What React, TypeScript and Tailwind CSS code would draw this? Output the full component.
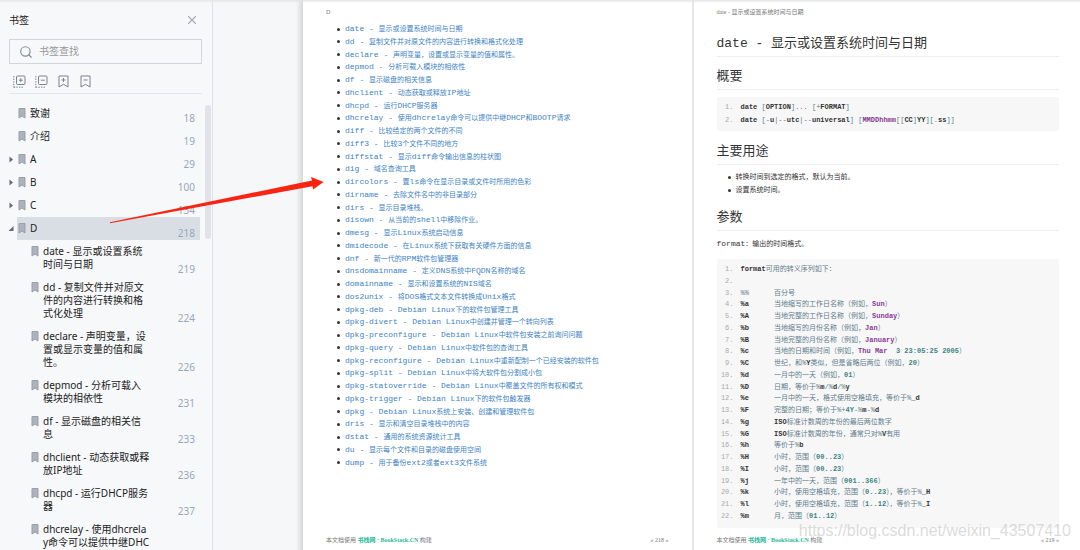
import { Fragment } from "react";
import { Search, X } from "lucide-react";

type Entry = { lines: string[]; page: number; level: 0 | 1; state?: "closed" | "open" };

const BOOKMARKS: Entry[] = [
  { lines: ["致谢"], page: 18, level: 0 },
  { lines: ["介绍"], page: 19, level: 0 },
  { lines: ["A"], page: 29, level: 0, state: "closed" },
  { lines: ["B"], page: 100, level: 0, state: "closed" },
  { lines: ["C"], page: 134, level: 0, state: "closed" },
  { lines: ["D"], page: 218, level: 0, state: "open" },
  { lines: ["date - 显示或设置系统", "时间与日期"], page: 219, level: 1 },
  { lines: ["dd - 复制文件并对原文", "件的内容进行转换和格", "式化处理"], page: 224, level: 1 },
  { lines: ["declare - 声明变量，设", "置或显示变量的值和属", "性。"], page: 226, level: 1 },
  { lines: ["depmod - 分析可载入", "模块的相依性"], page: 231, level: 1 },
  { lines: ["df - 显示磁盘的相关信", "息"], page: 233, level: 1 },
  { lines: ["dhclient - 动态获取或释", "放IP地址"], page: 236, level: 1 },
  { lines: ["dhcpd - 运行DHCP服务", "器"], page: 237, level: 1 },
  { lines: ["dhcrelay - 使用dhcrela", "y命令可以提供中继DHC", "P和BOOTP请求"], page: 238, level: 1 },
];

const COMMANDS = [
  "date - 显示或设置系统时间与日期",
  "dd - 复制文件并对原文件的内容进行转换和格式化处理",
  "declare - 声明变量，设置或显示变量的值和属性。",
  "depmod - 分析可载入模块的相依性",
  "df - 显示磁盘的相关信息",
  "dhclient - 动态获取或释放IP地址",
  "dhcpd - 运行DHCP服务器",
  "dhcrelay - 使用dhcrelay命令可以提供中继DHCP和BOOTP请求",
  "diff - 比较给定的两个文件的不同",
  "diff3 - 比较3个文件不同的地方",
  "diffstat - 显示diff命令输出信息的柱状图",
  "dig - 域名查询工具",
  "dircolors - 置ls命令在显示目录或文件时所用的色彩",
  "dirname - 去除文件名中的非目录部分",
  "dirs - 显示目录堆栈。",
  "disown - 从当前的shell中移除作业。",
  "dmesg - 显示Linux系统启动信息",
  "dmidecode - 在Linux系统下获取有关硬件方面的信息",
  "dnf - 新一代的RPM软件包管理器",
  "dnsdomainname - 定义DNS系统中FQDN名称的域名",
  "domainname - 显示和设置系统的NIS域名",
  "dos2unix - 将DOS格式文本文件转换成Unix格式",
  "dpkg-deb - Debian Linux下的软件包管理工具",
  "dpkg-divert - Debian Linux中创建并管理一个转向列表",
  "dpkg-preconfigure - Debian Linux中软件包安装之前询问问题",
  "dpkg-query - Debian Linux中软件包的查询工具",
  "dpkg-reconfigure - Debian Linux中重新配制一个已经安装的软件包",
  "dpkg-split - Debian Linux中将大软件包分割成小包",
  "dpkg-statoverride - Debian Linux中覆盖文件的所有权和模式",
  "dpkg-trigger - Debian Linux下的软件包触发器",
  "dpkg - Debian Linux系统上安装、创建和管理软件包",
  "dris - 显示和清空目录堆栈中的内容",
  "dstat - 通用的系统资源统计工具",
  "du - 显示每个文件和目录的磁盘使用空间",
  "dump - 用于备份ext2或者ext3文件系统",
];

// k = keyword, t = type, n = number, p = punctuation
type Token = ["k" | "t" | "n" | "p", string];

const TOKEN_COLOR = {
  k: "font-bold text-[#333333]",
  t: "font-bold text-[#8a3a93]",
  n: "font-bold text-[#3c8585]",
  p: "text-[#5f7d8c]",
};

const SYNOPSIS: Token[][] = [
  [["k", "date "], ["p", "["], ["k", "OPTION"], ["p", "]... [+"], ["k", "FORMAT"], ["p", "]"]],
  [
    ["k", "date "], ["p", "[-"], ["k", "u"], ["p", "|--"], ["k", "utc"], ["p", "|--"], ["k", "universal"], ["p", "] ["],
    ["t", "MMDDhhmm"], ["p", "[["], ["k", "CC"], ["p", "]"], ["k", "YY"], ["p", "][."], ["k", "ss"], ["p", "]]"],
  ],
];

const FORMATS: Token[][] = [
  [["k", "format"], ["p", "可用的转义序列如下："]],
  [],
  [["p", "%%      百分号"]],
  [["k", "%a      "], ["p", "当地缩写的工作日名称（例如，"], ["t", "Sun"], ["p", "）"]],
  [["k", "%A      "], ["p", "当地完整的工作日名称（例如，"], ["t", "Sunday"], ["p", "）"]],
  [["k", "%b      "], ["p", "当地缩写的月份名称（例如，"], ["t", "Jan"], ["p", "）"]],
  [["k", "%B      "], ["p", "当地完整的月份名称（例如，"], ["t", "January"], ["p", "）"]],
  [["k", "%c      "], ["p", "当地的日期和时间（例如，"], ["t", "Thu Mar  "], ["n", "3 23:05:25 2005"], ["p", "）"]],
  [["k", "%C      "], ["p", "世纪，和%"], ["k", "Y"], ["p", "类似，但是省略后两位（例如，"], ["n", "20"], ["p", "）"]],
  [["k", "%d      "], ["p", "一月中的一天（例如，"], ["n", "01"], ["p", "）"]],
  [["k", "%D      "], ["p", "日期，等价于%"], ["k", "m"], ["p", "/%"], ["k", "d"], ["p", "/%"], ["k", "y"]],
  [["k", "%e      "], ["p", "一月中的一天，格式使用空格填充，等价于%"], ["k", "_d"]],
  [["k", "%F      "], ["p", "完整的日期；等价于%+"], ["n", "4Y"], ["p", "-%"], ["k", "m"], ["p", "-%"], ["k", "d"]],
  [["k", "%g      ISO"], ["p", "标准计数周的年份的最后两位数字"]],
  [["k", "%G      ISO"], ["p", "标准计数周的年份，通常只对%"], ["k", "V"], ["p", "有用"]],
  [["k", "%h      "], ["p", "等价于%"], ["k", "b"]],
  [["k", "%H      "], ["p", "小时，范围（"], ["n", "00..23"], ["p", "）"]],
  [["k", "%I      "], ["p", "小时，范围（"], ["n", "00..23"], ["p", "）"]],
  [["k", "%j      "], ["p", "一年中的一天，范围（"], ["n", "001..366"], ["p", "）"]],
  [["k", "%k      "], ["p", "小时，使用空格填充，范围（"], ["n", "0..23"], ["p", "），等价于%"], ["k", "_H"]],
  [["k", "%l      "], ["p", "小时，使用空格填充，范围（"], ["n", "1..12"], ["p", "），等价于%"], ["k", "_I"]],
  [["k", "%m      "], ["p", "月，范围（"], ["n", "01..12"], ["p", "）"]],
];

// Chinese runs are set one size below the monospaced Latin
function Mixed({ text }: { text: string }) {
  return (
    <>
      {text.split(/([\u3000-\u9fff\uff00-\uffef]+)/).map((part, i) =>
        i % 2 ? <span key={i} className="text-[7px]">{part}</span> : <Fragment key={i}>{part}</Fragment>
      )}
    </>
  );
}

function BookmarkIcon() {
  return (
    <svg viewBox="0 0 8 11" className="h-[11px] w-2" aria-hidden="true">
      <path d="M1 .5h6v9.500L4 8 1 10z" fill="#adb2bc" stroke="#9a9fa9" />
    </svg>
  );
}

function TreeToolIcon({ plus }: { plus?: boolean }) {
  return (
    <svg viewBox="0 0 13 13" className="size-[13px]" fill="none" stroke="#7d838d" aria-hidden="true">
      <rect x="3.5" y="1" width="8.5" height="8.5" rx="1" />
      <path d={plus ? "M5.8 5.2h4M7.8 3.2v4" : "M5.8 5.2h4"} />
      <path d="M.8 1v11.5M.8 12.2h10" strokeDasharray="1.4 1.2" />
    </svg>
  );
}

function MarkToolIcon({ plus }: { plus?: boolean }) {
  return (
    <svg viewBox="0 0 13 13" className="size-[13px]" fill="none" stroke="#7d838d" aria-hidden="true">
      <path d="M2 1h9v11L6.500 9.300 2 12z" />
      <path d={plus ? "M4.500 5h4M6.500 3v4" : "M4.500 5h4"} />
    </svg>
  );
}

function Bookmark({ entry }: { entry: Entry }) {
  const open = entry.state === "open";
  return (
    <li className="flex">
      <span className="flex w-[9px] shrink-0 items-center">
        {entry.state && (
          <svg viewBox="0 0 6 7" className="h-[7px] w-[6px]" fill="#646a75" aria-hidden="true">
            <path d={open ? "M5.500 1v5H.5z" : "M1.500 .5 5 3.500 1.500 6.500z"} />
          </svg>
        )}
      </span>
      <a
        href={`#p${entry.page}`}
        className={`flex flex-1 py-[5px] pr-[5px] ${open ? "bg-[#d9dee5]" : ""} ${entry.level ? "pl-[14px]" : "pl-px"}`}
      >
        <span className="shrink-0 pt-px"><BookmarkIcon /></span>
        <span className="flex-1 pl-1 whitespace-nowrap">
          {entry.lines.map(line => <span key={line} className="block">{line}</span>)}
        </span>
        <span className="-mb-[5px] self-end text-[#9aa5bd]">{entry.page}</span>
      </a>
    </li>
  );
}

function Sidebar() {
  return (
    <aside className="flex w-[213px] shrink-0 flex-col border-r border-[#dfe2e8] bg-[#f6f8fa] pt-[13px] font-['Noto_Sans','Noto_Sans_CJK_SC',sans-serif] text-[10px] leading-[13px] text-[#222222]">
      <div className="flex items-center justify-between pr-[13px] pl-[9px]">
        <h1>书签</h1>
        <button aria-label="关闭"><X size={14} strokeWidth={2} className="text-[#a9adb5]" /></button>
      </div>
      <label className="mt-3 mr-[10px] ml-[9px] flex h-[25px] items-center gap-[6px] border border-[#d3d7dc] px-[9px]">
        <Search size={14} strokeWidth={2} className="shrink-0 text-[#828ca0]" />
        <input aria-label="书签查找" placeholder="书签查找" className="w-full min-w-0 outline-none placeholder:text-[#999999]" />
      </label>
      <div className="mr-[10px] ml-[9px] flex gap-[9px] border-b border-[#e3e6ea] pt-[11px] pb-[5px] pl-1">
        <button aria-label="全部展开"><TreeToolIcon plus /></button>
        <button aria-label="全部收起"><TreeToolIcon /></button>
        <button aria-label="添加书签"><MarkToolIcon plus /></button>
        <button aria-label="删除书签"><MarkToolIcon /></button>
      </div>
      <div className="flex min-h-0 flex-1 pt-[8px] pl-2">
        <ul className="flex-1 overflow-hidden">
          {BOOKMARKS.map(entry => <Bookmark key={entry.page} entry={entry} />)}
        </ul>
        <div className="mt-[3px] mr-px ml-[5px] h-[134px] w-[6px] rounded-full bg-[#e1e3e9]" />
      </div>
    </aside>
  );
}

function PageFooter({ page }: { page: number }) {
  return (
    <footer className="mt-auto flex justify-between font-['Liberation_Serif','Noto_Sans_CJK_SC',serif] text-[6px] leading-[8px] text-[#777777]">
      <span>本文档使用 <a href="#home" className="font-bold text-[#26b99a]">书栈网 · BookStack.CN</a> 构建</span>
      <span>« {page} »</span>
    </footer>
  );
}

function Heading({ children }: { children: string }) {
  return <h2 className="border-b border-[#eeeeee] pb-[3px] text-[13px] leading-[18px]">{children}</h2>;
}

function Code({ lines, size }: { lines: Token[][]; size: string }) {
  return (
    <ol className={`flex flex-col justify-between rounded-xs bg-[#f7f7f7] text-[7px] leading-[11px] ${size}`}>
      {lines.map((tokens, i) => (
        <li key={i} className="flex">
          <span className="w-[17px] text-right text-[#aaaaaa]">{i + 1}.</span>
          <code className="pl-[7px] font-[inherit] whitespace-pre">
            {tokens.map(([kind, text], j) => <span key={j} className={TOKEN_COLOR[kind]}>{text}</span>)}
          </code>
        </li>
      ))}
    </ol>
  );
}

const PAGE = "flex min-w-0 flex-1 flex-col bg-white pt-[8px] pl-[23px] pb-[6px] font-['Liberation_Mono','Noto_Sans_CJK_SC',monospace] text-[#333333]";
const RUNNING_HEAD = "font-['Liberation_Serif','Noto_Sans_CJK_SC',serif] text-[6px] leading-[8px] text-[#777777]";

export default function App() {
  return (
    <div className="relative flex h-screen overflow-hidden bg-[#f6f8fa]">
      <Sidebar />
      <div className="flex w-[90px] shrink-0 flex-col items-end bg-[#f5f7f9]">
        <div className="w-[7px] flex-1 bg-gradient-to-r from-[#f5f7f9] to-[#d6d7d9]" />
      </div>

      <main className="flex min-w-0 flex-1">
        <section className={`${PAGE} pr-[23px]`}>
          <p className={RUNNING_HEAD}>D</p>
          <ul className="mt-[7px] flex h-[446px] flex-col justify-between pl-[11px] text-[8px] leading-[12px] text-[#4183c4]">
            {COMMANDS.map(cmd => (
              <li key={cmd} className="flex items-center gap-[5px] whitespace-nowrap">
                <span className="size-[3px] rounded-full bg-[#333333]" />
                <a href={`#${cmd.split(" ")[0]}`}><Mixed text={cmd} /></a>
              </li>
            ))}
          </ul>
          <PageFooter page={218} />
        </section>

        <section className={`${PAGE} border-l-2 border-[#e6e6e6] pr-[21px]`}>
          <p className={RUNNING_HEAD}>date - 显示或设置系统时间与日期</p>
          <div className="mt-[19px]"><Heading>date - 显示或设置系统时间与日期</Heading></div>
          <div className="mt-[11px]"><Heading>概要</Heading></div>
          <div className="mt-[7px]"><Code lines={SYNOPSIS} size="h-[34px] py-[5px]" /></div>
          <div className="mt-[12px]"><Heading>主要用途</Heading></div>
          <ul className="mt-[6px] pl-[11px] text-[7px] leading-[13px]">
            {["转换时间到选定的格式，默认为当前。", "设置系统时间。"].map(text => (
              <li key={text} className="flex items-center gap-[5px]">
                <span className="size-[3px] rounded-full bg-[#333333]" />
                {text}
              </li>
            ))}
          </ul>
          <div className="mt-[12px]"><Heading>参数</Heading></div>
          <p className="mt-[6px] text-[8px] leading-[13px]"><Mixed text="format：输出的时间格式。" /></p>
          <div className="mt-[8px]"><Code lines={FORMATS} size="h-[269px] pt-[5px] pb-[6px]" /></div>
          <PageFooter page={219} />
        </section>
      </main>

      <div className="pointer-events-none absolute inset-x-0 top-0 h-[3px] bg-gradient-to-b from-[#e3e4e6] to-transparent" />
      <svg viewBox="0 0 214 48" className="pointer-events-none absolute top-[176px] left-[110px] h-[48px] w-[214px]" aria-hidden="true">
        <path d="M0 46.300 202 4.500 201 1 213.600 6 203 13.600 202.500 10.200 0 47.200z" fill="#fb2412" />
      </svg>
      <p className="pointer-events-none absolute right-[9px] bottom-[10px] font-['Liberation_Sans',sans-serif] text-[16px] leading-[18px] text-[#d2d2d2]/80">
        https://blog.csdn.net/weixin_43507410
      </p>
    </div>
  );
}
